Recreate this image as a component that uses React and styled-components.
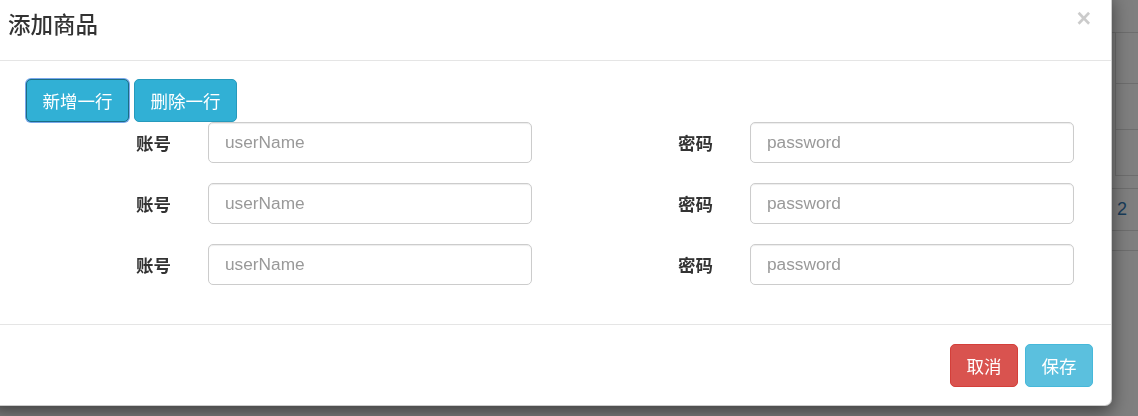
import React from 'react';
import styled, { createGlobalStyle } from 'styled-components';

const GlobalStyle = createGlobalStyle`
  html, body {
    margin: 0;
    padding: 0;
    width: 1138px;
    height: 416px;
    overflow: hidden;
    background: #fff;
  }
  body {
    font-family: "Liberation Sans", "Noto Sans CJK SC", sans-serif;
    color: #333;
  }
  * {
    box-sizing: border-box;
  }
`;

// page under the backdrop
const Page = styled.div`
  padding-top: 32px;
  padding-left: 1112px;
`;

const GridTable = styled.div`
  border-top: 1px solid #ddd;
`;

const GridRow = styled.div`
  height: ${props => props.h}px;
  border-bottom: 1px solid #ddd;
  border-left: ${props => (props.bordered ? '1px solid #ddd' : 'none')};
  margin-left: ${props => (props.bordered ? '3px' : '0')};
  display: flex;
  align-items: center;
  padding-left: 5px;
  font-size: 18px;
  color: #337ab7;
`;

const Spacer = styled.div`
  height: 12px;
`;

const Backdrop = styled.div`
  position: fixed;
  inset: 0;
  background: rgba(0, 0, 0, 0.5);
`;

const Dialog = styled.div`
  position: absolute;
  left: -11px;
  top: -8px;
  width: 1123px;
  background: #fff;
  border: 1px solid rgba(0, 0, 0, 0.2);
  border-radius: 7px;
  box-shadow: 0 6px 18px rgba(0, 0, 0, 0.5);
`;

const Header = styled.div`
  display: flex;
  justify-content: space-between;
  align-items: flex-start;
  padding: 18px;
  border-bottom: 1px solid #e5e5e5;
`;

const Title = styled.h4`
  margin: 0;
  font-size: 22.5px;
  line-height: 30.86px;
  font-weight: 500;
  color: #333;
`;

const Close = styled.button`
  border: 0;
  background: transparent;
  padding: 0;
  margin-top: -5px;
  margin-right: 2px;
  font-family: "Liberation Sans", sans-serif;
  font-size: 25px;
  font-weight: 700;
  line-height: 1;
  color: #000;
  opacity: 0.2;
`;

const Body = styled.div`
  padding: 18px 19px 19px 18px;
`;

const Toolbar = styled.div`
  display: flex;
  gap: 5px;
  padding-left: 18px;
`;

const Btn = styled.button`
  height: 43px;
  padding: 0 15.5px;
  font-family: "Liberation Sans", "Noto Sans CJK SC", sans-serif;
  font-size: 17.5px;
  color: #fff;
  border-radius: 5px;
  border: 1px solid ${props => props.border};
  background: ${props => props.bg};
  box-shadow: ${props => (props.focused ? '0 0 0 1px #78a8ec' : 'none')};
  cursor: pointer;
`;

const FormRow = styled.div`
  display: grid;
  grid-template-columns: 1fr 1fr;
  margin-bottom: 20px;
`;

const Field = styled.div`
  display: grid;
  grid-template-columns: 182px 1fr;
  align-items: center;
`;

const Label = styled.label`
  text-align: right;
  padding-right: 19px;
  font-size: 17.5px;
  font-weight: 700;
  color: #333;
`;

const Input = styled.input`
  margin: 0 18px;
  min-width: 0;
  height: 41px;
  padding: 0 16px;
  font-family: "Liberation Sans", sans-serif;
  font-size: 17.3px;
  color: #555;
  border: 1px solid #ccc;
  border-radius: 5px;
  box-shadow: inset 0 1px 1px rgba(0, 0, 0, 0.075);
  outline: none;
  &::placeholder {
    color: #999;
  }
`;

const Footer = styled.div`
  display: flex;
  justify-content: flex-end;
  gap: 7px;
  padding: 19px 18px 18px;
  border-top: 1px solid #e5e5e5;
`;

const rows = [0, 1, 2];

export default function App() {
  return (
    <>
      <GlobalStyle />
      <Page>
        <GridTable>
          <GridRow h={51} bordered />
          <GridRow h={46} bordered />
          <GridRow h={46} bordered />
        </GridTable>
        <Spacer />
        <GridTable>
          <GridRow h={42}>2</GridRow>
          <GridRow h={20} />
        </GridTable>
      </Page>
      <Backdrop />
      <Dialog>
        <Header>
          <Title>添加商品</Title>
          <Close>×</Close>
        </Header>
        <Body>
          <Toolbar>
            <Btn bg="#31b0d5" border="#1b6d85" focused>新增一行</Btn>
            <Btn bg="#31b0d5" border="#269abc">删除一行</Btn>
          </Toolbar>
          {rows.map(i => (
            <FormRow key={i}>
              <Field>
                <Label>账号</Label>
                <Input placeholder="userName" />
              </Field>
              <Field>
                <Label>密码</Label>
                <Input type="password" placeholder="password" />
              </Field>
            </FormRow>
          ))}
        </Body>
        <Footer>
          <Btn bg="#d9534f" border="#d43f3a">取消</Btn>
          <Btn bg="#5bc0de" border="#46b8da">保存</Btn>
        </Footer>
      </Dialog>
    </>
  );
}
